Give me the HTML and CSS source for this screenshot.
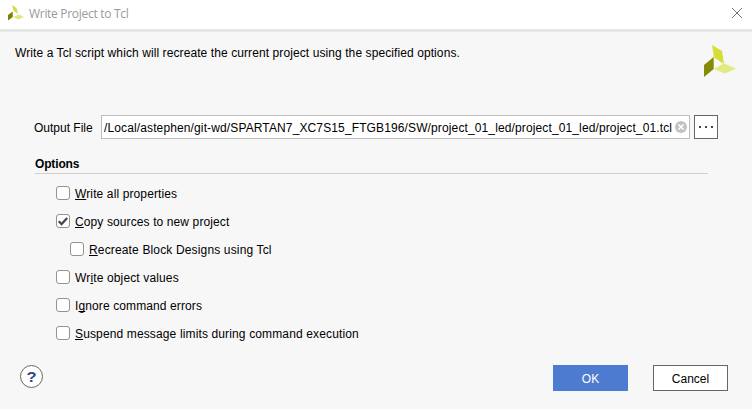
FILE: index.html
```html
<!DOCTYPE html>
<html lang="en">
<head>
<meta charset="utf-8">
<title>Write Project to Tcl</title>
<link rel="stylesheet" href="styles.css">
</head>
<body>
<div class="dialog">
  <header class="titlebar">
    <svg class="app-icon" width="16" height="16" viewBox="0 0 32 32"><path fill="#d2d94a" d="M8 0l9 6 3 12-9-7z"/><path fill="#808000" d="M0 20l9.500-7v11L0 31z"/><path fill="#e3e87e" d="M10 24l12-5 10 5-11 5z"/></svg>
    <h1 class="title">Write Project to Tcl</h1>
    <svg class="close" width="12" height="12" viewBox="0 0 12 12"><path d="M1 1l10 10M11 1L1 11" fill="none" stroke="#777" stroke-width="1"/></svg>
  </header>
  <main class="content">
    <div class="intro">
      <p class="description">Write a Tcl script which will recreate the current project using the specified options.</p>
      <svg class="logo" width="32" height="32" viewBox="0 0 32 32"><path fill="#d3df36" d="M8 0l10 6 2 13-10-6.500z"/><path fill="#858a06" d="M0 20l9.700-8v12L0 32z"/><path fill="#e3e983" d="M9.700 24L20 18.500 32 23.500 21 28.500z"/></svg>
    </div>
    <div class="file-row">
      <label class="file-label">Output File</label>
      <div class="file-input">
        <span class="path">/Local/astephen/git-wd/SPARTAN7_XC7S15_FTGB196/SW/project_01_led/project_01_led/project_01.tcl</span>
        <svg class="clear" width="12" height="12" viewBox="0 0 12 12"><circle cx="6" cy="6" r="6" fill="#c2c2c2"/><path d="M3.500 3.500l5 5M8.500 3.500l-5 5" stroke="#fff" stroke-width="1.600"/></svg>
      </div>
      <button class="browse"><svg width="14" height="2" viewBox="0 0 14 2"><path fill="#444" d="M0 0h2v2H0zM6 0h2v2H6zM12 0h2v2h-2z"/></svg></button>
    </div>
    <h2 class="section">Options</h2>
    <div class="options">
      <label class="option"><span class="box"></span><span class="text t-props"><u>W</u>rite all properties</span></label>
      <label class="option"><span class="box"><svg width="12" height="12" viewBox="0 0 12 12"><path d="M1.700 6.200l2.900 2.900 5.600-6" fill="none" stroke="#484848" stroke-width="2.200"/></svg></span><span class="text t-copy"><u>C</u>opy sources to new project</span></label>
      <label class="option nested"><span class="box"></span><span class="text t-block"><u>R</u>ecreate Block Designs using Tcl</span></label>
      <label class="option"><span class="box"></span><span class="text t-object">Wr<u>i</u>te object values</span></label>
      <label class="option"><span class="box"></span><span class="text t-ignore">I<u>g</u>nore command errors</span></label>
      <label class="option"><span class="box"></span><span class="text t-suspend"><u>S</u>uspend message limits during command execution</span></label>
    </div>
    <footer class="footer">
      <button class="help"><span class="mark">?</span></button>
      <button class="btn primary">OK</button>
      <button class="btn">Cancel</button>
    </footer>
  </main>
</div>
</body>
</html>
```

FILE: styles.css
```css
* { box-sizing: border-box; margin: 0; padding: 0; }
body { font: 12px/16px "Liberation Sans", Arial, sans-serif; color: #000; background: #f7f7f7; }
button { font: inherit; }
.dialog { width: 752px; height: 410px; display: flex; flex-direction: column; white-space: nowrap; overflow: hidden; border-bottom: 1px solid #fff; }
.titlebar { height: 32px; flex: none; display: flex; align-items: flex-start; padding: 5px 10px 0 8px; background: #fff; border-bottom: 3px solid #e6e6e6; }
.title { font: 12px/16px "Open Sans", "Noto Sans", sans-serif; color: #999; margin: 1px 0 0 5px; letter-spacing: -0.3px; }
.close { margin: 2px -1px 0 auto; }
.content { flex: 1; }
.intro { display: flex; justify-content: space-between; height: 83px; padding: 13px 16px 0 15px; }
.description { letter-spacing: 0.09px; }
.file-row { display: flex; align-items: center; height: 24px; padding-left: 34px; }
.file-label { width: 67px; padding-top: 1px; }
.file-input { width: 589px; height: 24px; border: 1px solid #bdbdbd; background: #fff; display: flex; align-items: center; padding-left: 2px; }
.path { width: 571px; padding-top: 1px; letter-spacing: 0.125px; }
.clear { flex: none; }
.browse { width: 24px; height: 24px; margin-left: 4px; border: 1px solid #666; background: #fff; display: flex; align-items: center; justify-content: center; }
.section { width: 673px; height: 19px; margin: 16px 0 0 35px; border-bottom: 1px solid #cfcfcf; font-size: 12px; line-height: 18px; letter-spacing: -0.15px; }
.options { padding: 5px 0 0 56px; }
.option { display: flex; height: 28px; align-items: center; }
.nested { margin-left: 14px; }
.box { width: 14px; height: 14px; margin-right: 5px; border: 1px solid #929292; border-radius: 3px; background: #fff; }
.box svg { display: block; }
.text { padding-top: 2px; }
.text u { text-decoration-thickness: 1px; text-underline-offset: 1px; text-decoration-skip-ink: none; }
.t-props { letter-spacing: 0.12px; }
.t-copy { letter-spacing: 0.11px; }
.t-block { letter-spacing: 0.15px; }
.t-object { letter-spacing: 0.14px; }
.t-ignore { letter-spacing: 0.11px; }
.t-suspend { letter-spacing: 0.135px; }
.footer { display: flex; align-items: flex-start; padding: 18px 24px 0 20px; }
.help { width: 23px; height: 23px; margin-right: auto; border: 1px solid #666; border-radius: 50%; background: #fff; color: #2d4788; font: bold 15px/22px "Liberation Sans", Arial, sans-serif; }
.mark { display: inline-block; transform: scaleX(1.1); }
.btn { width: 75px; height: 26px; margin-left: 25px; padding-top: 2px; border: 1px solid #666; background: #fff; color: #000; }
.primary { background: #4d7bd0; border-color: #4d7bd0; color: #fff; }
```
